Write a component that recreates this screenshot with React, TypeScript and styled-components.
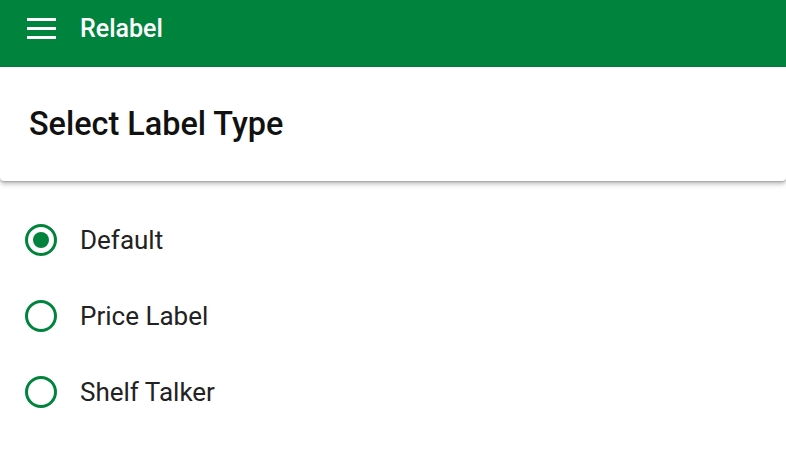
import React, { useState } from "react";
import styled, { createGlobalStyle } from "styled-components";

const GlobalStyle = createGlobalStyle`
  html, body {
    margin: 0;
    padding: 0;
    background: #fff;
    font-family: Roboto, "Liberation Sans", sans-serif;
  }
`;

const Page = styled.div`
  width: 786px;
  height: 466px;
  overflow: hidden;
  background: #fff;
`;

const AppBar = styled.header`
  box-sizing: border-box;
  height: 67px;
  background: #00843d;
  display: flex;
  align-items: center;
  padding: 0 0 10px 27px;
  gap: 24px;
  color: #fff;
`;

const MenuButton = styled.button`
  width: 29px;
  height: 21px;
  padding: 0;
  border: 0;
  background: none;
  display: flex;
  flex-direction: column;
  justify-content: space-between;
  cursor: pointer;

  & > span {
    display: block;
    height: 3px;
    background: #fff;
  }
`;

const AppTitle = styled.h1`
  margin: 0;
  font-size: 25px;
  line-height: 1;
  font-weight: 500;
`;

const HeaderCard = styled.section`
  height: 114px;
  display: flex;
  align-items: center;
  padding: 0 29px;
  background: #fff;
  border-radius: 0 0 4px 4px;
  box-shadow: 0 3px 5px rgba(0, 0, 0, 0.25), 0 1px 2px rgba(0, 0, 0, 0.2);
  position: relative;
`;

const CardTitle = styled.h2`
  margin: 0;
  font-size: 32.4px;
  line-height: 1;
  font-weight: 500;
  color: #111;
`;

const OptionList = styled.div`
  display: flex;
  flex-direction: column;
  padding: 43px 0 0 25px;
  gap: 44px;
`;

const Option = styled.label`
  display: flex;
  align-items: center;
  gap: 23px;
  height: 32px;
  line-height: 32px;
  cursor: pointer;
  font-size: 26px;
  color: #222;
`;

const RadioRing = styled.span<{ $checked: boolean }>`
  box-sizing: border-box;
  flex: none;
  width: 32px;
  height: 32px;
  border-radius: 50%;
  border: 3px solid #00843d;
  display: flex;
  align-items: center;
  justify-content: center;

  &::after {
    content: "";
    width: 16px;
    height: 16px;
    border-radius: 50%;
    background: #00843d;
    display: ${(p) => (p.$checked ? "block" : "none")};
  }
`;

const HiddenInput = styled.input`
  display: none;
`;

const labelTypes = ["Default", "Price Label", "Shelf Talker"];

export default function App() {
  const [selected, setSelected] = useState("Default");

  return (
    <Page>
      <GlobalStyle />
      <AppBar>
        <MenuButton aria-label="menu">
          <span />
          <span />
          <span />
        </MenuButton>
        <AppTitle>Relabel</AppTitle>
      </AppBar>
      <HeaderCard>
        <CardTitle>Select Label Type</CardTitle>
      </HeaderCard>
      <OptionList>
        {labelTypes.map((t) => (
          <Option key={t}>
            <HiddenInput
              type="radio"
              name="labelType"
              checked={selected === t}
              onChange={() => setSelected(t)}
            />
            <RadioRing $checked={selected === t} />
            {t}
          </Option>
        ))}
      </OptionList>
    </Page>
  );
}
